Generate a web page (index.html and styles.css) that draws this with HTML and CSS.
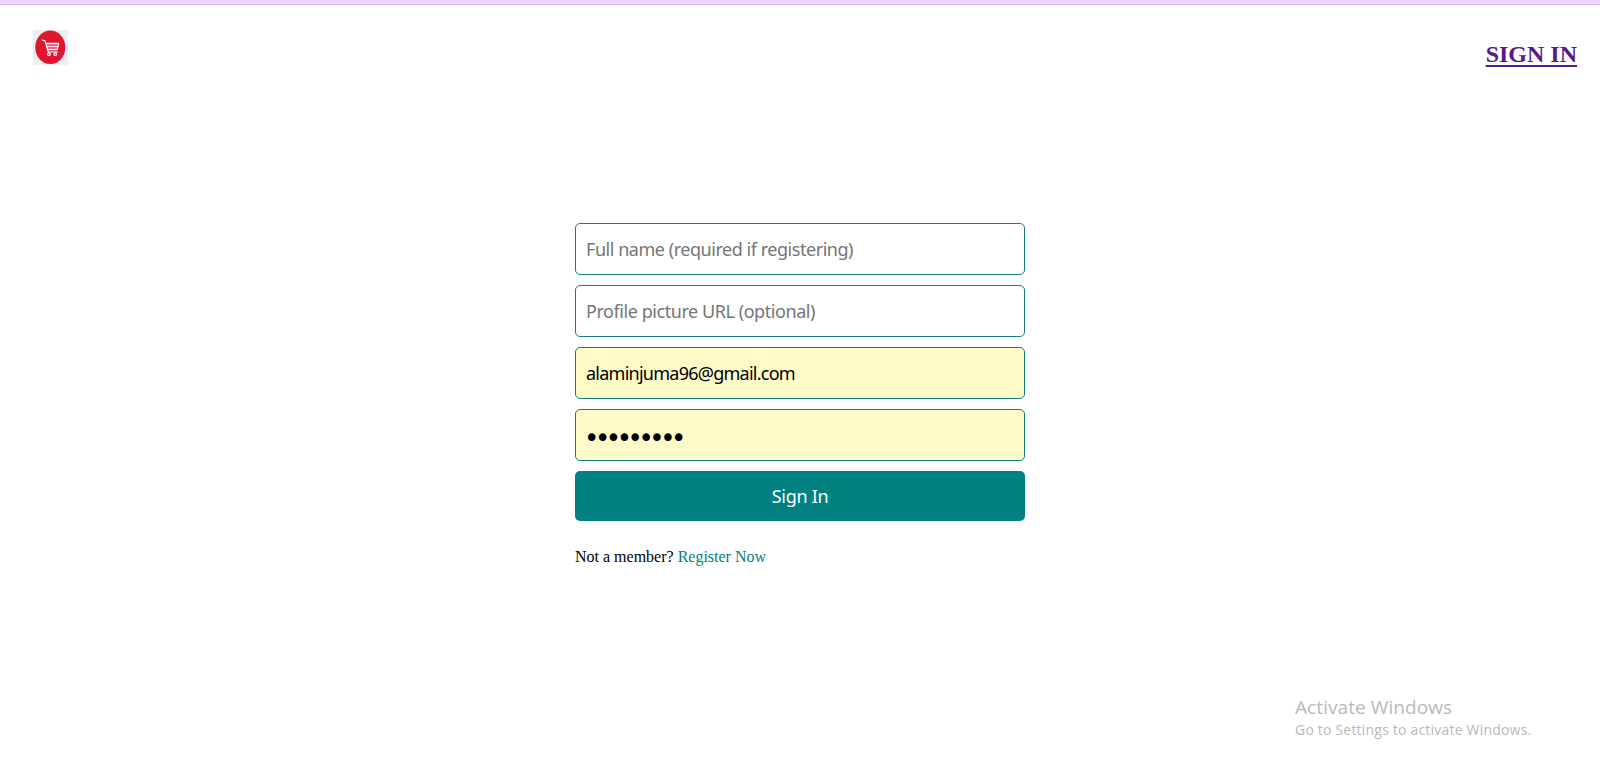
FILE: index.html
```html
<!DOCTYPE html>
<html lang="en">
<head>
<meta charset="utf-8">
<title>Sign In</title>
<link rel="stylesheet" href="styles.css">
</head>
<body>
<div class="topbar"></div>
<header class="header">
  <a class="logo" href="#" aria-label="Shop">
    <svg width="35" height="35" viewBox="0 0 35 35">
      <rect width="35" height="35" fill="#efedee"/>
      <ellipse cx="17.3" cy="17.3" rx="15" ry="16.8" fill="#df162f"/>
      <path d="M13 13.5H26L24.3 20.2H14.7Z" fill="#e76c82"/>
      <path d="M9.3 10L12 10.8L15.3 22H24.5M12.7 13.3H25.8L24.2 19.6H14.7" fill="none" stroke="#fff" stroke-width="1.2" stroke-linejoin="round" stroke-linecap="round"/>
      <path d="M13.7 16.5H25" stroke="#fff" stroke-width="0.7"/>
      <circle cx="16" cy="24.2" r="1.3" fill="none" stroke="#fff" stroke-width="1.1"/>
      <circle cx="22.3" cy="24.2" r="1.3" fill="none" stroke="#fff" stroke-width="1.1"/>
    </svg>
  </a>
  <a class="signin-link" href="#">SIGN IN</a>
</header>
<main class="login">
  <form class="form">
    <input class="field name" type="text" placeholder="Full name (required if registering)">
    <input class="field picture" type="text" placeholder="Profile picture URL (optional)">
    <input class="field filled email" type="text" value="alaminjuma96@gmail.com">
    <input class="field filled password" type="password" value="password1">
    <button class="submit" type="button">Sign In</button>
  </form>
  <p class="member">Not a member? <span class="register">Register Now</span></p>
</main>
<aside class="watermark">
  <div class="watermark-title">Activate Windows</div>
  <div class="watermark-text">Go to Settings to activate Windows.</div>
</aside>
</body>
</html>
```
FILE: styles.css
```css
* { box-sizing: border-box; }
body {
  margin: 0;
  height: 773px;
  overflow: hidden;
  background: #fff;
  font-family: "Liberation Serif", serif;
}
.topbar {
  height: 5px;
  background: #ecd3fb;
  border-bottom: 1px solid #d9c1e4;
}
.header {
  display: flex;
  justify-content: space-between;
  align-items: flex-start;
  height: 218px;
  padding: 25px 23px 0 33px;
}
.logo { display: block; width: 35px; height: 35px; }
.logo svg { display: block; }
.signin-link {
  margin-top: 10px;
  font-size: 24px;
  font-weight: bold;
  line-height: 28px;
  color: #551a8b;
  text-decoration-thickness: 2px;
  text-underline-offset: 3px;
}
.login { width: 450px; margin: 0 auto; }
.form { display: flex; flex-direction: column; gap: 10px; }
.field {
  height: 52px;
  padding: 0 10px;
  border: 1px solid #137c7c;
  border-radius: 5px;
  outline: none;
  background: #fff;
  color: #000;
  font: 18px "Noto Sans", sans-serif;
}
.field::placeholder { color: #757575; }
.name { letter-spacing: -0.46px; }
.picture { letter-spacing: -0.44px; }
.filled { background: #fffbc8; }
.email { letter-spacing: -0.75px; }
.password {
  padding: 5px 8px 0;
  font: 26px "DejaVu Sans", sans-serif;
  letter-spacing: -4.45px;
}
.submit {
  height: 50px;
  border: 0;
  border-radius: 5px;
  background: #008080;
  color: #fff;
  font: 18px "Noto Sans", sans-serif;
  letter-spacing: -0.3px;
}
.member { margin: 26px 0 0; font-size: 16px; line-height: 20px; color: #000; }
.register { color: #008080; }
.watermark {
  position: absolute;
  left: 1295px;
  top: 694px;
  color: #b9b9b9;
  font-family: "Open Sans", sans-serif;
  font-weight: 400;
  white-space: nowrap;
}
.watermark-title { font-size: 19px; line-height: 26px; letter-spacing: 0.08px; }
.watermark-text { font-size: 14px; line-height: 20px; letter-spacing: 0.2px; }
```
